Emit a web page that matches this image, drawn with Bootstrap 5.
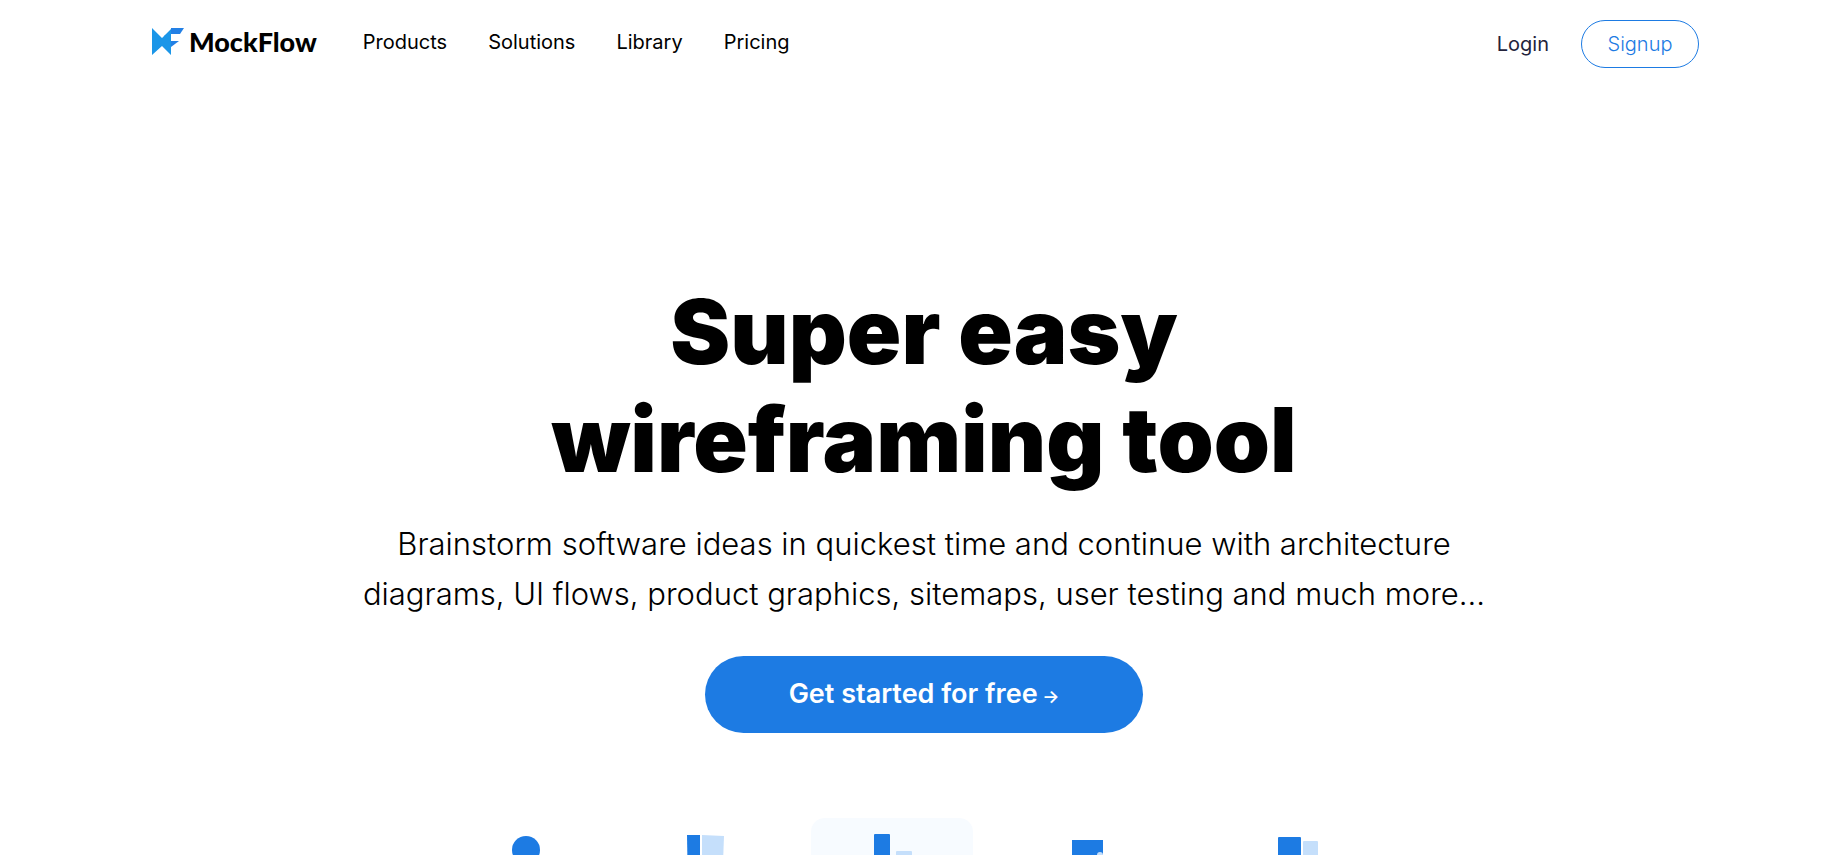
<!DOCTYPE html>
<html lang="en">
<head>
<meta charset="utf-8">
<meta name="viewport" content="width=device-width, initial-scale=1">
<title>MockFlow</title>
<link href="https://cdn.jsdelivr.net/npm/bootstrap@5.3.0/dist/css/bootstrap.min.css" rel="stylesheet">
<style>
  :root { --brand: #1d7be3; --brand-soft: #c5dffb; }
  body { font-family: Inter, "Open Sans", sans-serif; color: #000; background: #fff; }
  .page-shell { height: 100vh; }
  .site-header { max-width: 1574px; padding-top: 20px; }
  .brand-link, .site-links { padding-bottom: 4px; }
  .wordmark { font-family: Lato, sans-serif; font-weight: 900; font-size: 27px; line-height: 40px; color: #000; }
  .site-links { gap: 41px; margin-left: 46px; }
  .site-links .nav-link, .login-link { font-size: 20px; line-height: 30px; color: #000; padding: 0; }
  .site-links .nav-link:hover { color: var(--brand); }
  .site-header .login-link { color: #23233b; }
  .btn-signup { width: 118px; height: 48px; padding: 0; font-size: 20px; font-weight: 300; color: var(--brand); border: 1px solid var(--brand); border-radius: 24px; }
  .hero { padding-top: 210px; }
  .hero h1 { font-size: 90px; line-height: 108px; font-weight: 900; font-optical-sizing: none; margin-bottom: 25px; }
  .hero p { font-size: 31px; line-height: 50px; font-weight: 300; font-optical-sizing: none; margin-bottom: 37px; }
  .btn-start { width: 438px; height: 77px; font-size: 27px; font-weight: 600; color: #fff; background: var(--brand); border: 0; border-radius: 39px; }
  .btn-start small { font-size: 18px; }
  .btn-start:hover, .btn-signup:hover { color: #fff; background: #1668c4; }
  .tool-tabs { margin-top: 85px; gap: 32px; }
  .tool-tab { width: 148px; height: 162px; padding-top: 15px; border-radius: 14px; }
  .tool-tab.active { width: 162px; background: #f7fbff; }
  .tool-tab-narrow { width: 146px; }
  .tool-tab-wide { width: 170px; }
  .tool-tab-widest { width: 188px; }
  .fill-brand { fill: var(--brand); }
  .fill-soft { fill: var(--brand-soft); }
</style>
</head>
<body>
<div class="page-shell overflow-hidden">
  <header class="site-header container-fluid d-flex align-items-center">
    <a href="#" class="brand-link d-flex align-items-center gap-1 text-decoration-none">
      <svg width="36" height="28" viewBox="-3 0 36 28" aria-hidden="true">
        <path d="M0 0 10 10 19 1V27L10 18 0 27Z" fill="#1b96e8"/>
        <path d="M19 0H32L28 6H19Z" fill="#2380e5"/>
        <path d="M19 6V13L12 8 15 6Z" fill="#1b96e8"/>
        <path d="M19 13H27L19 19Z" fill="#2380e5"/>
      </svg>
      <span class="wordmark">MockFlow</span>
    </a>
    <nav class="nav site-links">
      <a class="nav-link" href="#">Products</a>
      <a class="nav-link" href="#">Solutions</a>
      <a class="nav-link" href="#">Library</a>
      <a class="nav-link" href="#">Pricing</a>
    </nav>
    <div class="d-flex align-items-center ms-auto">
      <a class="login-link text-decoration-none me-4" href="#">Login</a>
      <button type="button" class="btn btn-signup ms-2">Signup</button>
    </div>
  </header>
  <main>
    <section class="hero text-center">
      <h1>Super easy<br>wireframing tool</h1>
      <p>Brainstorm software ideas in quickest time and continue with architecture<br>diagrams, UI flows, product graphics, sitemaps, user testing and much more...</p>
      <button type="button" class="btn btn-start">Get started for free<small> →</small></button>
    </section>
    <nav class="tool-tabs d-flex justify-content-center" aria-label="Tools">
      <a href="#" class="tool-tab text-center" aria-label="Brainstorm">
        <svg width="50" height="60" viewBox="0 0 50 60"><circle class="fill-brand" cx="24" cy="17" r="14"/><path class="fill-soft" d="M2 58a22 22 0 0 1 44 0Z"/></svg>
      </a>
      <a href="#" class="tool-tab tool-tab-narrow text-center" aria-label="Diagram">
        <svg width="50" height="60" viewBox="0 0 50 60"><path class="fill-brand" d="M6 2H19V58H7Z"/><path class="fill-soft" d="M21 2 43 3 41 58H21Z"/></svg>
      </a>
      <a href="#" class="tool-tab text-center active" aria-label="Wireframe">
        <svg width="50" height="60" viewBox="0 0 50 60"><rect class="fill-brand" x="7" y="1" width="16" height="57" rx="1"/><rect class="fill-soft" x="29" y="18" width="16" height="40" rx="1"/></svg>
      </a>
      <a href="#" class="tool-tab tool-tab-wide text-center" aria-label="Design">
        <svg width="50" height="60" viewBox="0 0 50 60"><rect class="fill-brand" x="7" y="7" width="31" height="51"/><circle class="fill-soft" cx="35" cy="22" r="3"/></svg>
      </a>
      <a href="#" class="tool-tab tool-tab-widest text-center" aria-label="Sitemap">
        <svg width="50" height="60" viewBox="0 0 50 60"><rect class="fill-brand" x="2" y="4" width="23" height="54" rx="1"/><rect class="fill-soft" x="27" y="8" width="15" height="50" rx="1"/></svg>
      </a>
    </nav>
  </main>
</div>
<script src="https://cdn.jsdelivr.net/npm/bootstrap@5.3.0/dist/js/bootstrap.bundle.min.js"></script>
</body>
</html>
